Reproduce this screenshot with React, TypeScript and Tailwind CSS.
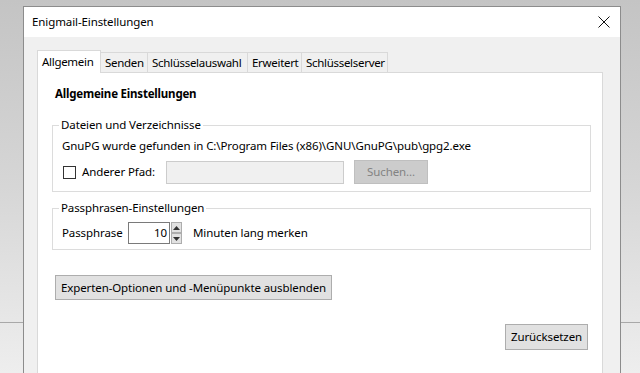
import React from 'react'

const font = { fontFamily: '"Noto Sans", "Open Sans", sans-serif', letterSpacing: '-0.1px' }

const Tab = ({ label, width, active }: { label: string; width: string; active?: boolean }) => (
    <div
        className={
            (active
                ? 'relative z-10 -mb-px h-[23px] bg-white pt-[2px] '
                : '-ml-px mt-[2px] h-[20px] bg-[#f0f0f0] pt-px ') +
            width +
            ' whitespace-nowrap border border-b-0 border-[#d9d9d9] pl-[4px] leading-[18px] tracking-[-0.3px]'
        }
    >
        {label}
    </div>
)

const SpinArrow = ({ up }: { up?: boolean }) => (
    <div className='flex h-[11px] w-[11px] items-center justify-center border border-[#adadad] bg-[#e1e1e1]'>
        <svg width='7' height='4' viewBox='0 0 7 4'>
            {up ? <path d='M0 4 L3.5 0 L7 4 Z' fill='#333' /> : <path d='M0 0 L3.5 4 L7 0 Z' fill='#333' />}
        </svg>
    </div>
)

const App = () => {
    return (
        <div className='relative h-[373px] w-[640px] overflow-hidden bg-gradient-to-b from-[#c4c4c4] via-[#d6d6d6] to-[#eeeeee] text-[11.5px] text-black' style={font}>
            {/* background windows */}
            <div className='absolute left-0 top-[322px] h-px w-[23px] bg-[#a8a8a8]' />
            <div className='absolute right-0 top-[322px] h-px w-[19px] bg-[#a8a8a8]' />

            {/* dialog */}
            <div className='absolute left-[23px] top-[6px] flex w-[598px] flex-col border border-[#8c8c8c] bg-[#f0f0f0]'>
                <div className='flex h-[30px] shrink-0 items-center justify-between bg-white pl-[8px] pr-[8px]'>
                    <span className='leading-[16px]'>Enigmail-Einstellungen</span>
                    <svg width='12' height='12' viewBox='0 0 12 12' className='mr-[2px]'>
                        <path d='M0.5 0.5 L11.5 11.5 M11.5 0.5 L0.5 11.5' stroke='#111' strokeWidth='1' />
                    </svg>
                </div>

                <div className='flex flex-col pl-[13px] pt-[13px]'>
                    <div className='flex items-start'>
                        <Tab label='Allgemein' width='w-[64px]' active />
                        <Tab label='Senden' width='w-[48px]' />
                        <Tab label='Schlüsselauswahl' width='w-[101px]' />
                        <Tab label='Erweitert' width='w-[55px]' />
                        <Tab label='Schlüsselserver' width='w-[87px]' />
                    </div>

                    <div className='flex h-[320px] w-[566px] shrink-0 flex-col border border-[#d9d9d9] bg-white pt-[13px]'>
                        <div className='pl-[17px] font-bold leading-[16px] tracking-[-0.2px]'>Allgemeine Einstellungen</div>

                        <fieldset className='ml-[14px] mt-[15px] w-[539px] border border-[#dcdcdc] pb-[7px] pl-[9px]'>
                            <legend className='-ml-[3px] px-[2px] leading-[16px]'>Dateien und Verzeichnisse</legend>
                            <div className='mt-[5px] leading-[16px]'>GnuPG wurde gefunden in C:\Program Files (x86)\GNU\GnuPG\pub\gpg2.exe</div>
                            <div className='mt-[6px] flex h-[24px] items-center'>
                                <div className='ml-px h-[13px] w-[13px] border border-[#333] bg-white' />
                                <span className='ml-[6px] w-[84px]'>Anderer Pfad:</span>
                                <div className='h-[23px] w-[178px] border border-[#cccccc] bg-[#f0f0f0]' />
                                <div className='ml-[10px] flex h-[24px] w-[74px] items-center justify-center border border-[#bfbfbf] bg-[#cccccc] text-[#838383]'>Suchen...</div>
                            </div>
                        </fieldset>

                        <fieldset className='ml-[14px] mt-[8px] w-[539px] border border-[#dcdcdc] pb-[5px] pl-[9px]'>
                            <legend className='-ml-[3px] px-[2px] leading-[16px]'>Passphrasen-Einstellungen</legend>
                            <div className='mt-[6px] flex h-[22px] items-center'>
                                <span className='w-[66px]'>Passphrase</span>
                                <div className='flex h-[22px] w-[42px] items-center justify-end border border-[#7a7a7a] pr-[2px]'>10</div>
                                <div className='ml-px flex flex-col'>
                                    <SpinArrow up />
                                    <SpinArrow />
                                </div>
                                <span className='ml-[11px]'>Minuten lang merken</span>
                            </div>
                        </fieldset>

                        <div className='ml-[17px] mt-[25px] flex h-[25px] w-[277px] shrink-0 items-center justify-center border border-[#adadad] bg-[#e1e1e1]'>
                            Experten-Optionen und -Menüpunkte ausblenden
                        </div>

                        <div className='mr-[14px] mt-[24px] flex h-[26px] w-[83px] shrink-0 items-center justify-center self-end border border-[#adadad] bg-[#e1e1e1]'>
                            Zurücksetzen
                        </div>
                    </div>
                </div>
            </div>
        </div>
    )
}

export default App
